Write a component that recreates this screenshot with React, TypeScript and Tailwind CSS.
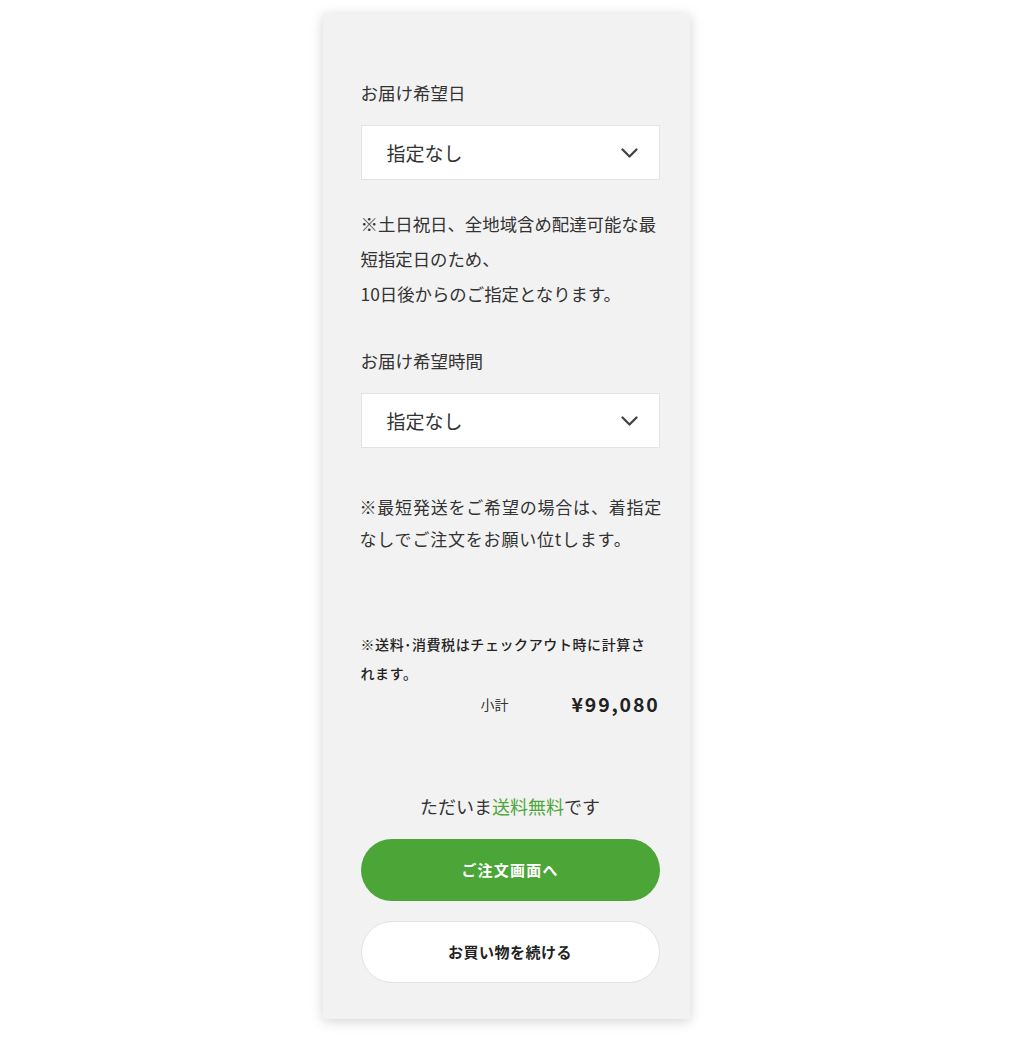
import React from "react";

const font = { fontFamily: '"Noto Sans CJK JP", "Noto Sans", sans-serif' };

function Chevron() {
  return (
    <svg width="17" height="10" viewBox="0 0 17 10" fill="none" className="shrink-0">
      <path d="M1.5 1.5L8.5 8.5l7-7" stroke="#444" strokeWidth="2.3" strokeLinecap="round" strokeLinejoin="round" />
    </svg>
  );
}

function SelectBox({ value }: { value: string }) {
  return (
    <div className="h-[55px] bg-white border border-[#e3e3e3] flex items-center justify-between pl-[25px] pr-[21px]">
      <span className="text-[19px] text-[#333] leading-none">{value}</span>
      <Chevron />
    </div>
  );
}

export default function App() {
  return (
    <div className="min-h-screen bg-white flex justify-center pt-[14px] pb-[25px] pr-[4px]" style={font}>
      <div className="w-[367px] bg-[#f2f2f2] shadow-[0_2px_12px_rgba(0,0,0,0.18)] pt-[66px] pb-[36px] pl-[38px] pr-[30px] text-[#333]">
        <p className="text-[17.5px] leading-[26px]">お届け希望日</p>
        <div className="mt-[19px]">
          <SelectBox value="指定なし" />
        </div>
        <p className="mt-[26px] text-[17.4px] leading-[35px] whitespace-nowrap">
          ※土日祝日、全地域含め配達可能な最
          <br />
          短指定日のため、
          <br />
          10日後からのご指定となります。
        </p>

        <p className="mt-[37px] text-[17.5px] leading-[26px]">お届け希望時間</p>
        <div className="mt-[19px]">
          <SelectBox value="指定なし" />
        </div>
        <p className="mt-[43px] -ml-[1px] -mr-[4px] text-[17px] leading-[32px] tracking-[0.8px] whitespace-nowrap">
          ※最短発送をご希望の場合は、着指定
          <br />
          なしでご注文をお願い位tします。
        </p>

        <p className="mt-[75px] text-[14px] leading-[29px] font-medium tracking-[0.6px] text-[#222] whitespace-nowrap">
          ※送料･消費税はチェックアウト時に計算さ
          <br />
          れます。
        </p>
        <div className="mt-[3px] flex items-center justify-end gap-[63px]">
          <span className="text-[14px] leading-[26px] text-[#333]">小計</span>
          <span className="text-[19.5px] leading-[26px] font-bold tracking-[1.8px] text-[#222]">¥99,080</span>
        </div>

        <p className="mt-[76px] text-center text-[18px] leading-[26px] text-[#333]">
          ただいま<span className="text-[#4ea73a]">送料無料</span>です
        </p>
        <button className="mt-[20px] w-full h-[62px] rounded-full bg-[#4ba537] text-white text-[15px] font-bold tracking-[1.2px]">
          ご注文画面へ
        </button>
        <button className="mt-[20px] w-full h-[62px] rounded-full bg-white border border-[#e2e2e2] text-[#222] text-[15px] font-bold tracking-[0.5px]">
          お買い物を続ける
        </button>
      </div>
    </div>
  );
}
